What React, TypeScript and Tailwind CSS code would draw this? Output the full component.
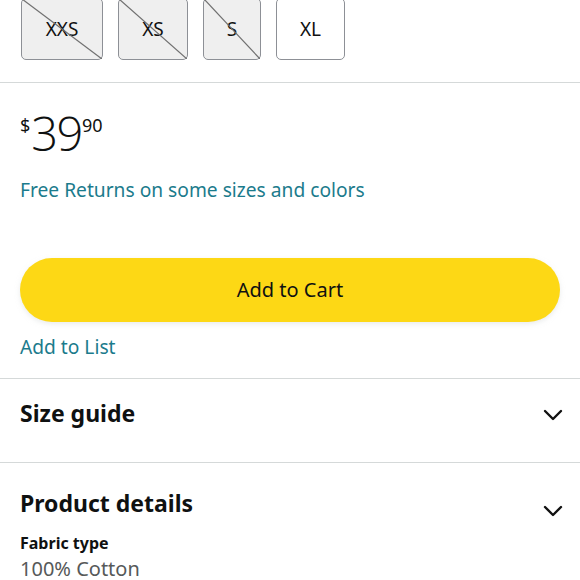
import React from "react";

function SizeBox({ label, w, disabled }: { label: string; w: string; disabled?: boolean }) {
  return (
    <div
      className={`relative ${w} h-[62px] rounded-[5px] border border-[#8d9096] flex items-center justify-center text-[19px] text-[#111] ${
        disabled ? "bg-[#efefef]" : "bg-white"
      }`}
    >
      <span>{label}</span>
      {disabled && (
        <svg className="absolute inset-0 w-full h-full" preserveAspectRatio="none" viewBox="0 0 100 100">
          <line x1="0" y1="0" x2="100" y2="100" stroke="#6f6f6f" strokeWidth="1.2" vectorEffect="non-scaling-stroke" />
        </svg>
      )}
    </div>
  );
}

function Chevron() {
  return (
    <svg width="20" height="12" viewBox="0 0 20 12" fill="none">
      <path d="M2 2 L10 10 L18 2" stroke="#111" strokeWidth="2.4" strokeLinecap="round" strokeLinejoin="round" />
    </svg>
  );
}

export default function App() {
  return (
    <div className="w-[580px] h-[580px] overflow-hidden bg-white" style={{ fontFamily: '"Noto Sans", "Open Sans", sans-serif' }}>
      <div className="flex gap-[15px] pl-[21px] mt-[-2px]">
        <SizeBox label="XXS" w="w-[82px]" disabled />
        <SizeBox label="XS" w="w-[70px]" disabled />
        <SizeBox label="S" w="w-[58px]" disabled />
        <SizeBox label="XL" w="w-[69px]" />
      </div>
      <div className="mt-[22px] h-[1px] bg-[#d5d9d9]" />

      <div className="px-[20px]">
        <div className="flex items-start mt-[28px] h-[44px] text-[#0f1111]">
          <span className="text-[18px] leading-none mt-[5px]">$</span>
          <span className="text-[47px] leading-none mt-[-1px] ml-[1px] tracking-[-1.5px]" style={{ fontFamily: '"Open Sans", sans-serif', fontWeight: 300 }}>39</span>
          <span className="text-[18px] leading-none mt-[5px]">90</span>
        </div>
        <div className="mt-[22px] text-[19.2px] leading-[26px] text-[#1b7b8c]">Free Returns on some sizes and colors</div>

        <button className="mt-[55px] w-full h-[64px] rounded-full bg-[#fdd815] text-[20px] text-[#0f1111] flex items-center justify-center shadow-[0_2px_5px_rgba(213,217,217,0.5)]">
          Add to Cart
        </button>
        <div className="mt-[12px] text-[19.2px] leading-[26px] text-[#1b7b8c]">Add to List</div>
      </div>

      <div className="mt-[18px] h-[1px] bg-[#d5d9d9]" />
      <div className="flex items-start justify-between pl-[20px] pr-[17px] pt-[19px] h-[83px]">
        <span className="text-[23px] font-bold leading-[30px] text-[#0f1111]">Size guide</span>
        <div className="mt-[11px]"><Chevron /></div>
      </div>
      <div className="h-[1px] bg-[#d5d9d9]" />
      <div className="pl-[20px] pr-[17px] pt-[23px]">
        <div className="flex items-start justify-between">
          <span className="text-[23px] font-bold leading-[34px] text-[#0f1111]">Product details</span>
          <div className="mt-[19px]"><Chevron /></div>
        </div>
        <div className="mt-[12px] text-[16px] font-bold leading-[22px] text-[#0f1111]">Fabric type</div>
        <div className="mt-[2px] text-[20px] leading-[26px] text-[#565959]">100% Cotton</div>
      </div>
    </div>
  );
}
